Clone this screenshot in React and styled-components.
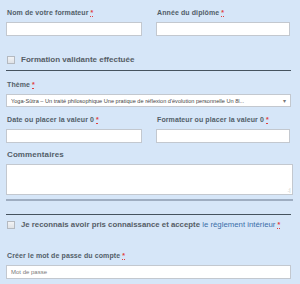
import styled, { createGlobalStyle } from "styled-components";

const GlobalStyle = createGlobalStyle`
  html, body {
    margin: 0;
    padding: 0;
    background: #d6e6f8;
    font-family: "Liberation Sans", Arial, sans-serif;
  }
`;

export default function App() {
  return (
    <>
      <GlobalStyle />
      <Form>
        <Row>
          <Field>
            <Label>
              Nom de votre formateur <Req>*</Req>
            </Label>
            <Input />
          </Field>
          <Field>
            <Label>
              Année du diplôme <Req>*</Req>
            </Label>
            <Input />
          </Field>
        </Row>

        <CheckRow>
          <Box />
          <CheckText $size={8}>Formation validante effectuée</CheckText>
        </CheckRow>
        <Rule />

        <Field $top={10}>
          <Label>
            Thème <Req>*</Req>
          </Label>
          <Select>
            <SelectText>
              Yoga-Sûtra – Un traité philosophique Une pratique de réflexion
              d'évolution personnelle Un 8l...
            </SelectText>
            <Arrow>▾</Arrow>
          </Select>
        </Field>

        <Row $top={9}>
          <Field>
            <Label>
              Date ou placer la valeur 0 <Req>*</Req>
            </Label>
            <Input />
          </Field>
          <Field>
            <Label>
              Formateur ou placer la valeur 0 <Req>*</Req>
            </Label>
            <Input />
          </Field>
        </Row>

        <Field $top={7}>
          <BigLabel>Commentaires</BigLabel>
          <TextWrap>
            <TextArea />
            <Grip>.:|</Grip>
          </TextWrap>
        </Field>
        <SoftRule />
        <Rule $top={13} />

        <CheckRow $top={5}>
          <Box />
          <CheckText $size={7.8}>
            Je reconnais avoir pris connaissance et accepte{" "}
            <Link>le règlement intérieur</Link> <Req>*</Req>
          </CheckText>
        </CheckRow>

        <Field $top={22}>
          <Label>
            Créer le mot de passe du compte <Req>*</Req>
          </Label>
          <Input placeholder="Mot de passe" />
        </Field>
      </Form>
    </>
  );
}

const Form = styled.div`
  padding: 9px 9px 0 6px;
  display: flex;
  flex-direction: column;
`;

const Row = styled.div`
  display: grid;
  grid-template-columns: 136px 134px;
  column-gap: 14px;
  margin-top: ${({ $top }) => $top || 0}px;
`;

const Field = styled.div`
  display: flex;
  flex-direction: column;
  margin-top: ${({ $top }) => $top || 0}px;
`;

const Label = styled.label`
  font-size: 7px;
  font-weight: bold;
  letter-spacing: 0.1px;
  color: #525e69;
  line-height: 8px;
  margin-left: 1px;
  margin-bottom: 5px;
`;

const BigLabel = styled(Label)`
  font-size: 8px;
  line-height: 9px;
  margin-bottom: 5px;
`;

const Req = styled.abbr`
  color: #e04040;
  font-size: 7px;
  text-decoration: underline dotted;
`;

const Input = styled.input`
  box-sizing: border-box;
  height: 14px;
  width: 100%;
  border: 1px solid #c3c8cf;
  background: #fff;
  margin: 0;
  padding: 0 0 0 4px;
  font-family: inherit;
  font-size: 6px;
  color: #555;
  &::placeholder {
    color: #7a7a7a;
  }
`;

const CheckRow = styled.div`
  display: flex;
  align-items: center;
  gap: 6px;
  margin-top: ${({ $top }) => $top || 19}px;
  padding-left: 1px;
`;

const Box = styled.span`
  box-sizing: border-box;
  width: 8px;
  height: 8px;
  border: 1px solid #b4b9c0;
  background: linear-gradient(#f2f3f5, #dfe2e6);
  flex: none;
`;

const CheckText = styled.span`
  font-size: ${({ $size }) => $size}px;
  font-weight: bold;
  color: #555d66;
  line-height: 10px;
`;

const Link = styled.span`
  color: #3b6ea8;
  font-weight: normal;
`;

const Rule = styled.div`
  height: 1px;
  width: 285px;
  background: #46535f;
  margin-top: ${({ $top }) => $top || 5}px;
`;

const SoftRule = styled.div`
  height: 2px;
  width: 287px;
  background: #9eadc1;
  margin-top: 4px;
`;

const Select = styled.div`
  box-sizing: border-box;
  height: 13px;
  width: 285px;
  border: 1px solid #c3c8cf;
  background: #fff;
  display: flex;
  align-items: center;
  padding: 0 4px 0 4px;
`;

const SelectText = styled.span`
  flex: 1;
  font-size: 5.6px;
  color: #444;
  white-space: nowrap;
  overflow: hidden;
`;

const Arrow = styled.span`
  font-size: 6px;
  color: #777;
  margin-left: 5px;
`;

const TextWrap = styled.div`
  position: relative;
  width: 287px;
  height: 31px;
`;

const TextArea = styled.textarea`
  box-sizing: border-box;
  display: block;
  height: 31px;
  width: 287px;
  border: 1px solid #c3c8cf;
  background: #fff;
  margin: 0;
  resize: none;
`;

const Grip = styled.span`
  position: absolute;
  right: 3px;
  bottom: 2px;
  font-size: 5px;
  line-height: 5px;
  color: #b8bcc2;
  letter-spacing: -0.5px;
`;
